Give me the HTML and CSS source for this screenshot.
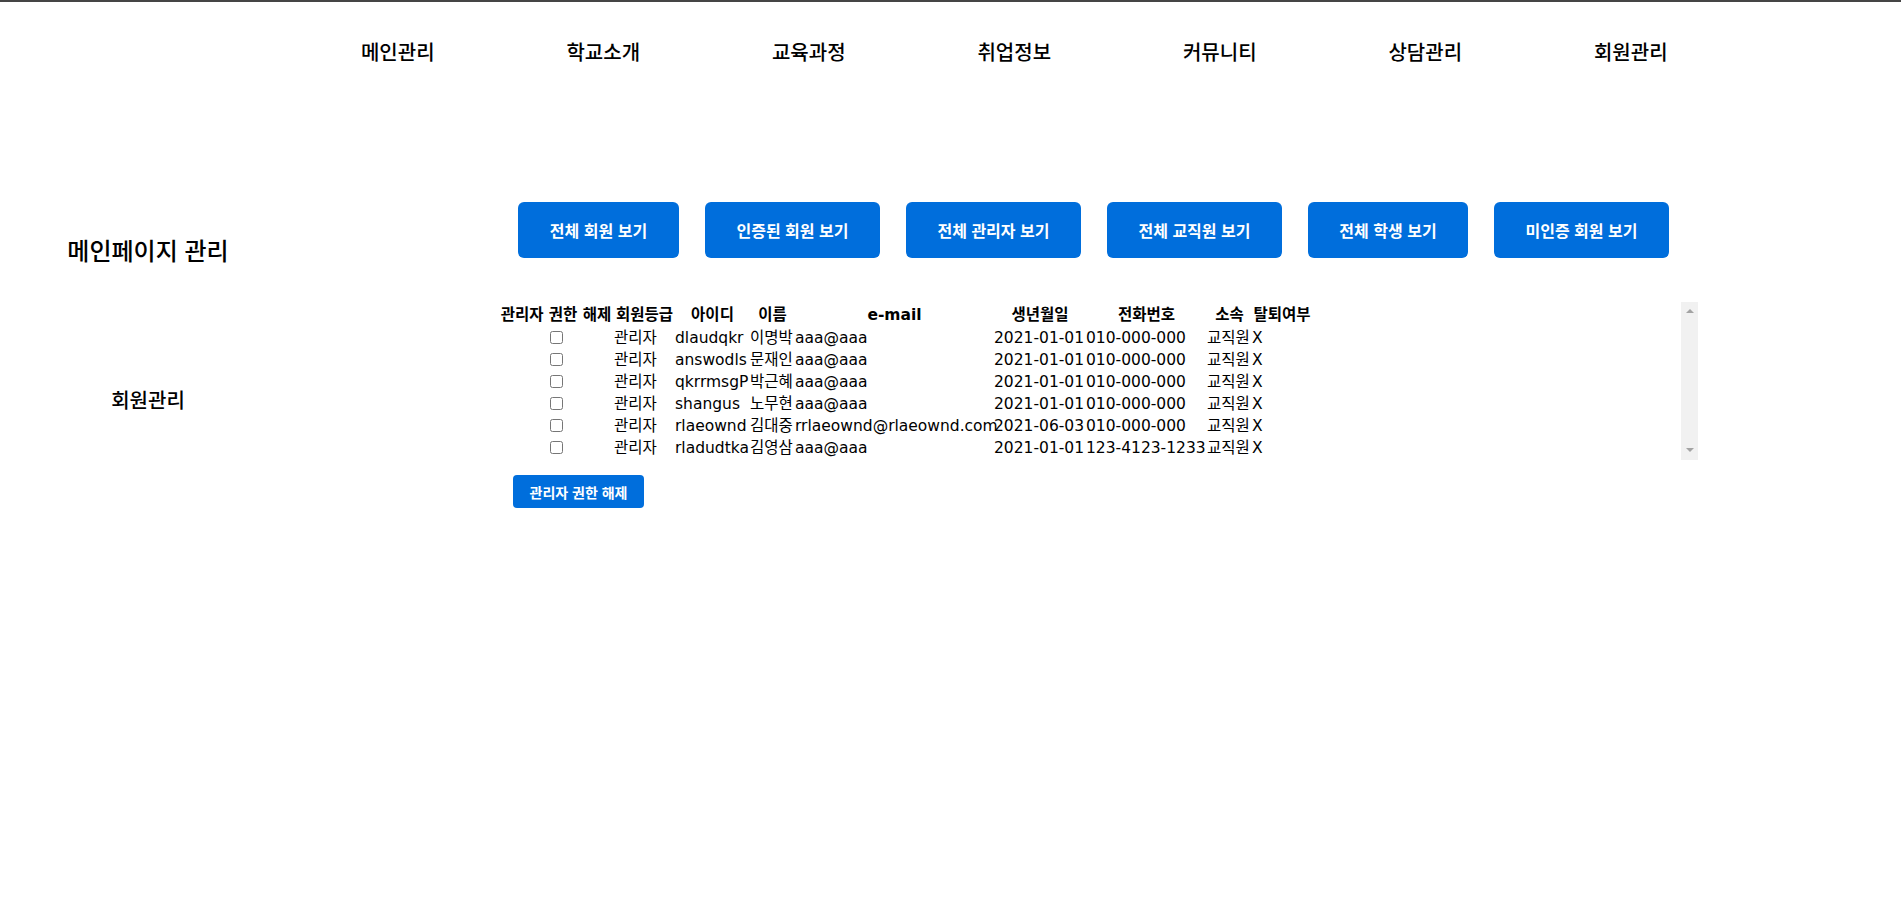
FILE: index.html
```html
<!DOCTYPE html>
<html lang="ko">
<head>
<meta charset="utf-8">
<title>회원관리</title>
<link rel="stylesheet" href="styles.css">
</head>
<body>
<header class="topbar">
  <nav class="gnb">
    <a class="gnb-item">메인관리</a>
    <a class="gnb-item">학교소개</a>
    <a class="gnb-item">교육과정</a>
    <a class="gnb-item">취업정보</a>
    <a class="gnb-item">커뮤니티</a>
    <a class="gnb-item">상담관리</a>
    <a class="gnb-item">회원관리</a>
  </nav>
</header>
<main class="layout">
  <aside class="side">
    <h2 class="side-title">메인페이지 관리</h2>
    <h3 class="side-link">회원관리</h3>
  </aside>
  <section class="content">
    <div class="filters">
      <button class="btn btn-short">전체 회원 보기</button>
      <button class="btn">인증된 회원 보기</button>
      <button class="btn">전체 관리자 보기</button>
      <button class="btn">전체 교직원 보기</button>
      <button class="btn btn-shorter">전체 학생 보기</button>
      <button class="btn">미인증 회원 보기</button>
    </div>
    <div class="list-box">
      <div class="list-scroll">
        <table class="member-table">
          <colgroup>
            <col class="c1"><col class="c2"><col class="c3"><col class="c4"><col class="c5"><col class="c6"><col class="c7"><col class="c8"><col class="c9">
          </colgroup>
          <thead>
            <tr>
              <th>관리자 권한 해제</th><th>회원등급</th><th>아이디</th><th>이름</th><th>e-mail</th><th>생년월일</th><th>전화번호</th><th>소속</th><th>탈퇴여부</th>
            </tr>
          </thead>
          <tbody>
            <tr><td class="chk"><input type="checkbox"></td><td>관리자</td><td>dlaudqkr</td><td>이명박</td><td>aaa@aaa</td><td>2021-01-01</td><td>010-000-000</td><td>교직원</td><td>X</td></tr>
            <tr><td class="chk"><input type="checkbox"></td><td>관리자</td><td>answodls</td><td>문재인</td><td>aaa@aaa</td><td>2021-01-01</td><td>010-000-000</td><td>교직원</td><td>X</td></tr>
            <tr><td class="chk"><input type="checkbox"></td><td>관리자</td><td>qkrrmsgP</td><td>박근혜</td><td>aaa@aaa</td><td>2021-01-01</td><td>010-000-000</td><td>교직원</td><td>X</td></tr>
            <tr><td class="chk"><input type="checkbox"></td><td>관리자</td><td>shangus</td><td>노무현</td><td>aaa@aaa</td><td>2021-01-01</td><td>010-000-000</td><td>교직원</td><td>X</td></tr>
            <tr><td class="chk"><input type="checkbox"></td><td>관리자</td><td>rlaeownd</td><td>김대중</td><td>rrlaeownd@rlaeownd.com</td><td>2021-06-03</td><td>010-000-000</td><td>교직원</td><td>X</td></tr>
            <tr><td class="chk"><input type="checkbox"></td><td>관리자</td><td>rladudtka</td><td>김영삼</td><td>aaa@aaa</td><td>2021-01-01</td><td>123-4123-1233</td><td>교직원</td><td>X</td></tr>
          </tbody>
        </table>
      </div>
      <div class="fake-scrollbar">
        <span class="arrow arrow-up"></span>
        <span class="arrow arrow-down"></span>
      </div>
    </div>
    <button class="btn-small">관리자 권한 해제</button>
  </section>
</main>
</body>
</html>
```

FILE: styles.css
```css
html, body {
  margin: 0;
  padding: 0;
  background: #fff;
}

body {
  border-top: 2px solid #454545;
  font-family: "Noto Sans CJK KR", sans-serif;
  color: #000;
}

.gnb {
  display: flex;
  padding: 37px 0 0 295px;
}

.gnb-item {
  width: 205.5px;
  text-align: center;
  font-size: 20px;
  line-height: 26px;
  font-weight: 500;
  color: #000;
  text-decoration: none;
}

.layout {
  display: flex;
  margin-top: 137px;
}

.side {
  width: 296px;
  flex: none;
  text-align: center;
}

.side-title {
  margin: 32px 0 0;
  font-size: 24px;
  line-height: 32px;
  font-weight: 500;
}

.side-link {
  margin: 120px 0 0;
  font-size: 20px;
  line-height: 28px;
  font-weight: 500;
}

.content {
  padding-left: 201px;
}

.filters {
  display: flex;
  gap: 26px;
  margin-left: 21px;
}

.btn {
  width: 175px;
  height: 56px;
  padding: 0;
  border: none;
  border-radius: 6px;
  background: #006edc;
  color: #fff;
  font-family: "Noto Sans CJK KR", sans-serif;
  font-size: 16px;
  font-weight: 700;
}

.btn-short {
  width: 161px;
}

.btn-shorter {
  width: 160px;
}

.list-box {
  display: flex;
  width: 1201px;
  height: 158px;
  margin-top: 44px;
}

.list-scroll {
  flex: 1;
  padding: 2px 0 0 1px;
}

.member-table {
  border-collapse: separate;
  border-spacing: 0;
  table-layout: fixed;
  width: 814px;
  font-family: "DejaVu Sans", "Noto Sans CJK KR", sans-serif;
  font-size: 15.5px;
}

.c1 { width: 116px; }
.c2 { width: 61px; }
.c3 { width: 75px; }
.c4 { width: 45px; }
.c5 { width: 199px; }
.c6 { width: 92px; }
.c7 { width: 121px; }
.c8 { width: 45px; }
.c9 { width: 60px; }

.member-table th,
.member-table td {
  padding: 0;
  white-space: nowrap;
  overflow: visible;
}

.member-table th {
  line-height: 23px;
  font-weight: 700;
  text-align: center;
}

.member-table td {
  line-height: 22px;
  text-align: left;
  font-weight: 400;
}

.member-table td.chk {
  text-align: center;
}

.member-table input[type="checkbox"] {
  margin: 0;
  width: 13px;
  height: 13px;
  vertical-align: -1px;
}

.fake-scrollbar {
  width: 17px;
  flex: none;
  background: #f1f1f1;
  display: flex;
  flex-direction: column;
  justify-content: space-between;
  align-items: center;
  padding: 7px 0 8px;
  box-sizing: border-box;
}

.arrow {
  width: 0;
  height: 0;
  border-left: 4px solid transparent;
  border-right: 4px solid transparent;
}

.arrow-up {
  border-bottom: 4px solid #a3a3a3;
}

.arrow-down {
  border-top: 4px solid #a3a3a3;
}

.btn-small {
  display: block;
  margin: 15px 0 0 16px;
  width: 131px;
  height: 33px;
  padding: 0;
  border: none;
  border-radius: 4px;
  background: #006edc;
  color: #fff;
  font-family: "Noto Sans CJK KR", sans-serif;
  font-size: 14px;
  font-weight: 700;
}
```
